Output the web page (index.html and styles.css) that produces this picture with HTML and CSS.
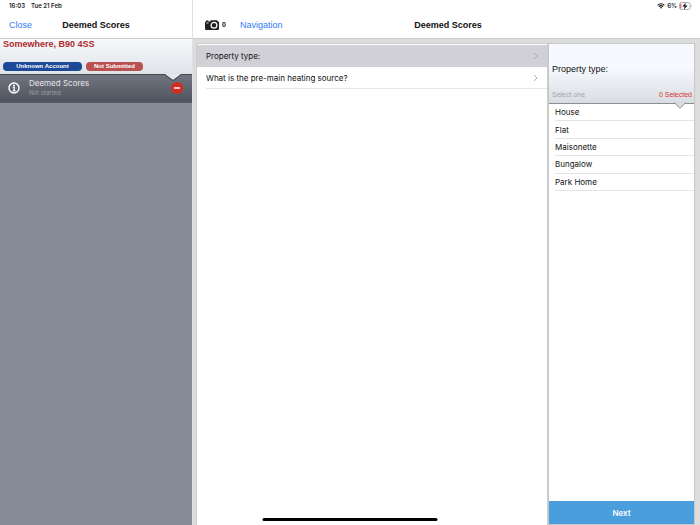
FILE: index.html
```html
<!DOCTYPE html>
<html lang="en">
<head>
    <meta charset="UTF-8">
    <meta name="viewport" content="width=device-width, initial-scale=1.0">
    <title>Deemed Scores</title>
    <link rel="stylesheet" href="styles.css">
</head>
<body>
    <aside class="sidebar">
        <div class="status-bar">
            <span>16:03</span>
            <span>Tue 21 Feb</span>
        </div>
        <header class="nav-bar">
            <div class="nav-left"><a href="#">Close</a></div>
            <h1>Deemed Scores</h1>
        </header>
        <div class="address">
            <h2>Somewhere, B90 4SS</h2>
            <div class="badges">
                <span class="badge account">Unknown Account</span>
                <span class="badge submitted">Not Submitted</span>
            </div>
        </div>
        <div class="survey">
            <svg class="notch" viewBox="0 0 16 7"><path d="M0 0L8 6L16 0Z" fill="#e4e8ec"/><path d="M0 1L8 6.5L16 1" fill="none" stroke="#45484f"/></svg>
            <svg class="info" viewBox="0 0 12 12">
                <circle cx="6" cy="6" r="5" fill="none" stroke="#fff" stroke-width="1.4"/>
                <circle cx="6" cy="3.4" r="0.9" fill="#fff"/>
                <path d="M4.8 5.2H6.2V8.7M4.6 8.8H7.6" fill="none" stroke="#fff" stroke-width="1.3"/>
            </svg>
            <div class="survey-text">
                <h3>Deemed Scores</h3>
                <p>Not started</p>
            </div>
            <button class="remove" aria-label="Remove">
                <svg viewBox="0 0 12 12"><circle cx="6" cy="6" r="6" fill="#d42c20"/><path d="M3 6H9" stroke="#fff" stroke-width="1.5"/></svg>
            </button>
        </div>
    </aside>

    <main class="content">
        <div class="status-bar right">
            <svg class="wifi" viewBox="0 0 14 10">
                <path d="M1 3.8C4.5 0.5 9.5 0.5 13 3.8M3.3 6.2C5.6 4 8.4 4 10.7 6.2" fill="none" stroke="#111" stroke-width="1.9"/>
                <path d="M5 7.7Q7 6 9 7.7L7 9.8Z" fill="#111"/>
            </svg>
            <span>6%</span>
            <svg class="battery" viewBox="0 0 13 8">
                <rect x="0.5" y="0.5" width="10.5" height="7" rx="2" fill="#fff" stroke="#999" stroke-width="0.8"/>
                <rect x="1.3" y="1.4" width="1" height="5.2" rx="0.5" fill="#e33b30"/>
                <path d="M12 2.7Q13.2 4 12 5.3Z" fill="#999"/>
                <path d="M6.7 0.8L3.4 4.6H5.6L5 7.4L8.6 3.5H6.2Z" fill="#111"/>
            </svg>
        </div>
        <header class="nav-bar">
            <div class="nav-left">
                <svg class="camera" viewBox="0 0 14 10">
                    <path d="M0 2.5Q0 1.5 1 1.5V0.5H3.5V1.5H5L6 0.3H12L13 1.5Q14 1.5 14 2.5V9Q14 10 13 10H1Q0 10 0 9Z" fill="#222"/>
                    <circle cx="9" cy="5.3" r="2.9" fill="none" stroke="#fff" stroke-width="1.2"/>
                    <path d="M1.3 3H3.5" stroke="#fff" stroke-width="0.8"/>
                </svg>
                <span class="count">0</span>
                <a href="#">Navigation</a>
            </div>
            <h1>Deemed Scores</h1>
        </header>

        <div class="panels">
            <section class="questions">
                <button class="question active">Property type:
                    <svg class="chevron" viewBox="0 0 5 8"><path d="M1 1L4 4L1 7"/></svg>
                </button>
                <button class="question">What is the pre-main heating source?
                    <svg class="chevron" viewBox="0 0 5 8"><path d="M1 1L4 4L1 7"/></svg>
                </button>
            </section>

            <section class="answers">
                <div class="answers-head">
                    <h2>Property type:</h2>
                    <div class="answers-info">
                        <span>Select one</span>
                        <span class="selected">0 Selected</span>
                    </div>
                    <svg class="notch" viewBox="0 0 16 7"><path d="M2 0L8 6L14 0Z" fill="#d9dde1"/><path d="M2 0.5L8 6.3L14 0.5" fill="none" stroke="#8c8f92"/></svg>
                </div>
                <ul class="options">
                    <li><button>House</button></li>
                    <li><button>Flat</button></li>
                    <li><button>Maisonette</button></li>
                    <li><button>Bungalow</button></li>
                    <li><button>Park Home</button></li>
                </ul>
                <button class="next">Next</button>
            </section>
        </div>
    </main>
    <div class="home-bar"></div>
</body>
</html>
```
FILE: styles.css
```css
* {
	box-sizing: border-box;
}

body {
	margin: 0;
	height: 100vh;
	display: grid;
	grid-template-columns: 48fr 127fr;
	font-family: Inter, "Liberation Sans", sans-serif;
	font-size: 8px;
	line-height: 10px;
	color: #111;
	background-color: #fff;
}

h1, h2, h3, p, ul {
	margin: 0;
	padding: 0;
}

a {
	color: #2f7cf6;
	text-decoration: none;
}

button {
	border: none;
	padding: 0;
	background: none;
	font: inherit;
	color: inherit;
	text-align: left;
	cursor: pointer;
}

svg {
	display: block;
}

/* Top bars */
.status-bar {
	height: 12px;
	padding: 0 9px;
	display: flex;
	align-items: center;
	gap: 6px;
	font-size: 6px;
	font-weight: 600;
	color: #222;
}

.status-bar.right {
	justify-content: flex-end;
	gap: 2px;
	padding-right: 8px;
}

.wifi {
	width: 8px;
	height: 6px;
}

.battery {
	width: 13px;
	height: 8px;
}

.nav-bar {
	height: 27px;
	padding: 0 9px 0 12px;
	display: grid;
	grid-template-columns: 1fr auto 1fr;
	align-items: center;
	border-bottom: 1px solid #ccc;
	font-family: "Liberation Sans", sans-serif;
	font-size: 9px;
}

.nav-bar h1 {
	font-size: 9px;
	font-weight: 700;
}

.sidebar .nav-bar {
	padding: 0 9px;
}

.nav-left {
	display: flex;
	align-items: center;
}

.camera {
	width: 14px;
	height: 10px;
}

.count {
	margin: 0 14px 0 3px;
	font-size: 7px;
	font-weight: 700;
}

/* Left column */
.sidebar {
	display: flex;
	flex-direction: column;
	background: #888c98;
}

.sidebar .status-bar,
.sidebar .nav-bar {
	background-color: #fff;
}

.address {
	height: 35px;
	padding: 0 3px 3px;
	display: flex;
	flex-direction: column;
	justify-content: space-between;
	font-family: "Liberation Sans", sans-serif;
	background: linear-gradient(#f6fafd, #dfe3e7);
}

.address h2 {
	font-size: 9px;
	font-weight: 700;
	color: #b0282b;
}

.badges {
	display: flex;
	gap: 4px;
}

.badge {
	height: 9px;
	border-radius: 4px;
	font-size: 6px;
	line-height: 9px;
	font-weight: 700;
	color: #fff;
	text-align: center;
}

.account {
	width: 79px;
	background-color: #1c4a96;
}

.submitted {
	width: 57px;
	background-color: #b85150;
}

.survey {
	position: relative;
	height: 29px;
	padding: 0 9px 1px 8px;
	display: flex;
	align-items: center;
	border-top: 1px solid #45484f;
	border-bottom: 1px solid #555963;
	background: linear-gradient(#70747f, #50545f);
}

.info {
	width: 12px;
	height: 12px;
}

.survey-text {
	flex: 1;
	margin-left: 9px;
	padding-bottom: 1px;
	color: #e6e7ea;
}

.survey-text h3 {
	font-size: 8px;
	font-weight: 400;
}

.survey-text p {
	font-size: 6px;
	color: #9a9da5;
}

.remove {
	width: 12px;
	height: 12px;
}

.notch {
	position: absolute;
	top: -1px;
	right: 11px;
	width: 16px;
	height: 7px;
}

/* Right side */
.content {
	display: flex;
	flex-direction: column;
	border-left: 1px solid #e0e0e0;
}

.panels {
	flex: 1;
	padding: 4px 5px 0 3px;
	display: grid;
	grid-template-columns: 352fr 147fr;
	background-color: #dcdcdc;
}

.questions {
	padding-top: 1px;
	border: 1px solid #ccc;
	border-bottom: none;
	border-radius: 3px 0 0 0;
	background-color: #fff;
}

.question {
	width: 100%;
	height: 22px;
	padding: 0 9px;
	display: flex;
	align-items: center;
	justify-content: space-between;
	background: linear-gradient(#e8e8e8, #e8e8e8) bottom right / calc(100% - 9px) 1px no-repeat;
}

.question.active {
	background: #d1d0d6;
}

.chevron {
	width: 5px;
	height: 8px;
	fill: none;
	stroke: #aaaab0;
}

.answers {
	display: flex;
	flex-direction: column;
	border: 1px solid #c8c8c8;
	background-color: #fff;
}

.answers-head {
	position: relative;
	height: 60px;
	padding: 20px 2px 3px 3px;
	display: flex;
	flex-direction: column;
	justify-content: space-between;
	border-bottom: 1px solid #8c8f92;
	background: linear-gradient(#f6fafe 40%, #d9dde1);
}

.answers-head .notch {
	top: 58px;
	right: 6px;
}

.answers-head h2 {
	font-family: "Liberation Sans", sans-serif;
	font-size: 9px;
	font-weight: 400;
}

.answers-info {
	display: flex;
	justify-content: space-between;
	font-family: "Liberation Sans", sans-serif;
	font-size: 7px;
	color: #a3a5a8;
}

.answers-info .selected {
	color: #d6322d;
}

.options {
	height: 87px;
	display: flex;
	flex-direction: column;
	list-style: none;
}

.options li {
	flex: 1;
	margin-left: 6px;
	display: flex;
	border-bottom: 1px solid #e4e4e4;
}

.options button {
	flex: 1;
}

.next {
	height: 23px;
	margin-top: auto;
	background-color: #4a9edd;
	font-weight: 600;
	color: #fff;
	text-align: center;
}

.home-bar {
	position: fixed;
	bottom: 4px;
	left: 50%;
	width: 25%;
	height: 3px;
	border-radius: 2px;
	background-color: #000;
	transform: translateX(-50%);
}
```
